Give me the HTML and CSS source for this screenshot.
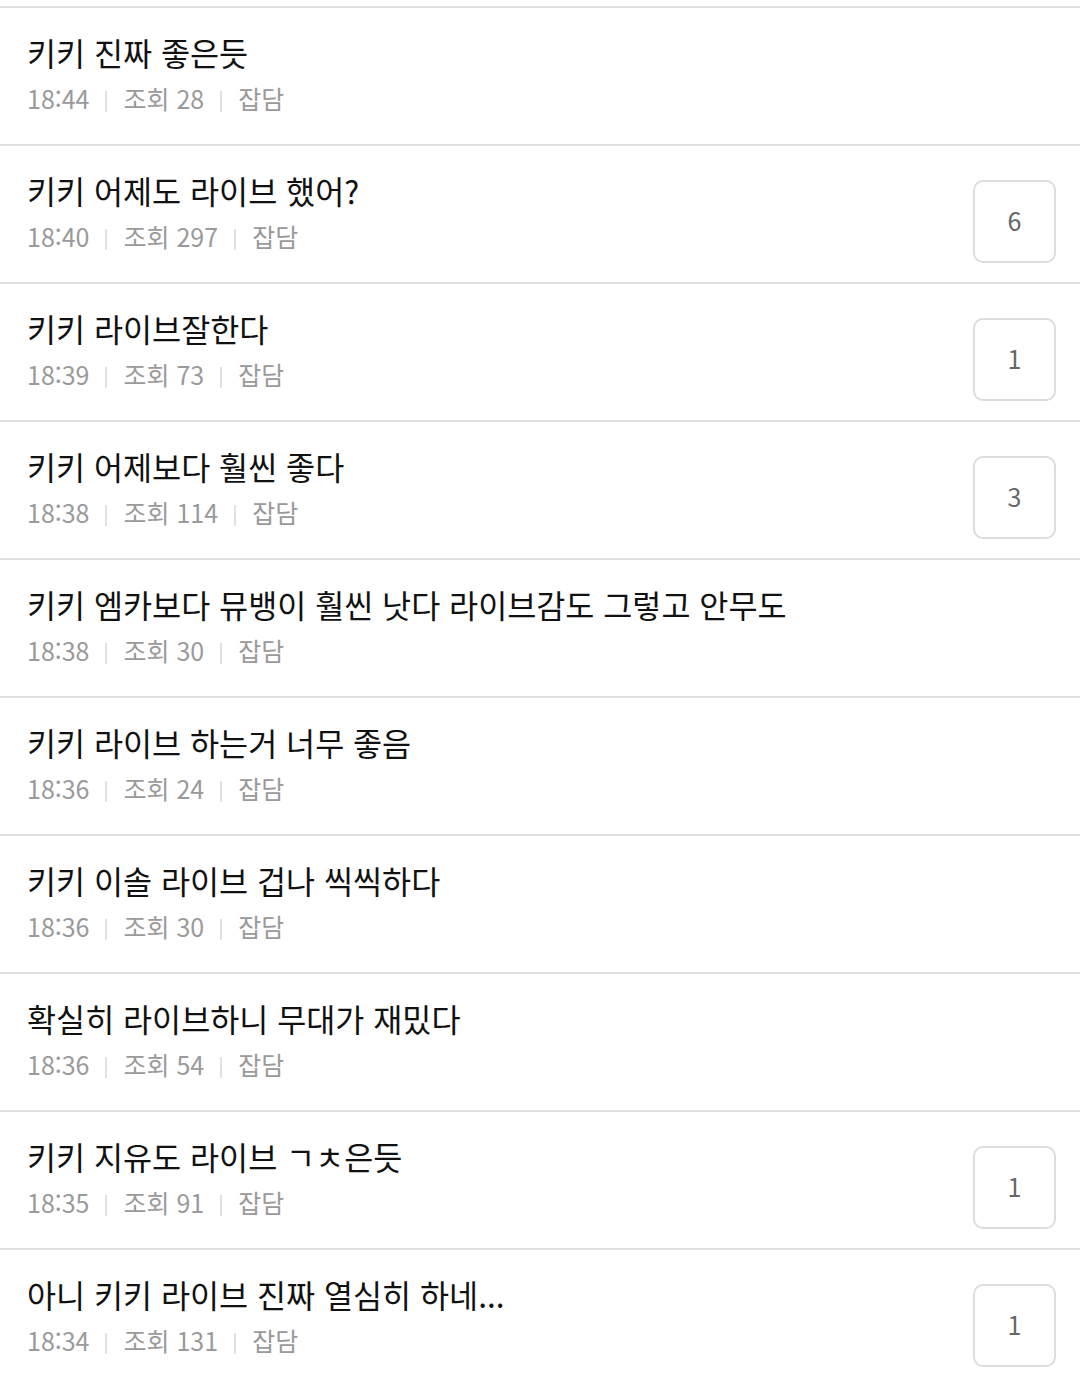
FILE: index.html
```html
<!DOCTYPE html>
<html lang="ko">
<head>
    <meta charset="UTF-8">
    <meta name="viewport" content="width=device-width, initial-scale=1.0">
    <title>잡담 게시판</title>
    <link rel="stylesheet" href="styles.css">
</head>
<body>
    <ul class="post-list">
        <li class="post">
            <div class="post-main">
                <div class="post-title">키키 진짜 좋은듯</div>
                <div class="post-meta"><span>18:44</span><span>조회 28</span><span>잡담</span></div>
            </div>
        </li>
        <li class="post">
            <div class="post-main">
                <div class="post-title">키키 어제도 라이브 했어?</div>
                <div class="post-meta"><span>18:40</span><span>조회 297</span><span>잡담</span></div>
            </div>
            <div class="comment-count">6</div>
        </li>
        <li class="post">
            <div class="post-main">
                <div class="post-title">키키 라이브잘한다</div>
                <div class="post-meta"><span>18:39</span><span>조회 73</span><span>잡담</span></div>
            </div>
            <div class="comment-count">1</div>
        </li>
        <li class="post">
            <div class="post-main">
                <div class="post-title">키키 어제보다 훨씬 좋다</div>
                <div class="post-meta"><span>18:38</span><span>조회 114</span><span>잡담</span></div>
            </div>
            <div class="comment-count">3</div>
        </li>
        <li class="post">
            <div class="post-main">
                <div class="post-title">키키 엠카보다 뮤뱅이 훨씬 낫다 라이브감도 그렇고 안무도</div>
                <div class="post-meta"><span>18:38</span><span>조회 30</span><span>잡담</span></div>
            </div>
        </li>
        <li class="post">
            <div class="post-main">
                <div class="post-title">키키 라이브 하는거 너무 좋음</div>
                <div class="post-meta"><span>18:36</span><span>조회 24</span><span>잡담</span></div>
            </div>
        </li>
        <li class="post">
            <div class="post-main">
                <div class="post-title">키키 이솔 라이브 겁나 씩씩하다</div>
                <div class="post-meta"><span>18:36</span><span>조회 30</span><span>잡담</span></div>
            </div>
        </li>
        <li class="post">
            <div class="post-main">
                <div class="post-title">확실히 라이브하니 무대가 재밌다</div>
                <div class="post-meta"><span>18:36</span><span>조회 54</span><span>잡담</span></div>
            </div>
        </li>
        <li class="post">
            <div class="post-main">
                <div class="post-title">키키 지유도 라이브 ㄱㅊ은듯</div>
                <div class="post-meta"><span>18:35</span><span>조회 91</span><span>잡담</span></div>
            </div>
            <div class="comment-count">1</div>
        </li>
        <li class="post">
            <div class="post-main">
                <div class="post-title">아니 키키 라이브 진짜 열심히 하네...</div>
                <div class="post-meta"><span>18:34</span><span>조회 131</span><span>잡담</span></div>
            </div>
            <div class="comment-count">1</div>
        </li>
    </ul>
</body>
</html>
```

FILE: styles.css
```css
:root {
    --text: #111111;
    --text-light: #9a9a9a;
    --line: #e1e1e1;
    --bg: #ffffff;
}

* {
    margin: 0;
    padding: 0;
    box-sizing: border-box;
}

body {
    background-color: var(--bg);
    font-family: "Noto Sans CJK KR", "Noto Sans", sans-serif;
    overflow: hidden;
}

.post-list {
    list-style: none;
    padding-top: 6px;
}

.post {
    display: flex;
    align-items: flex-start;
    height: 138px;
    padding: 0 24px 0 27px;
    border-top: 2px solid var(--line);
}

.post-main {
    flex: 1;
    padding-top: 22px;
}

.post-title {
    color: var(--text);
    font-size: 31.6px;
    line-height: 44px;
    white-space: nowrap;
}

.post-meta {
    display: flex;
    align-items: center;
    margin-top: 7px;
    color: var(--text-light);
    font-size: 25px;
    line-height: 34px;
}

.post-meta span + span::before {
    content: "";
    display: inline-block;
    width: 2px;
    height: 21px;
    margin: 0 16px;
    background-color: var(--line);
    vertical-align: -3px;
}

.comment-count {
    width: 83px;
    height: 83px;
    margin-top: 34px;
    padding-bottom: 4px;
    border: 2px solid #dddddd;
    border-radius: 10px;
    display: flex;
    align-items: center;
    justify-content: center;
    color: #666666;
    font-size: 25px;
}
```
